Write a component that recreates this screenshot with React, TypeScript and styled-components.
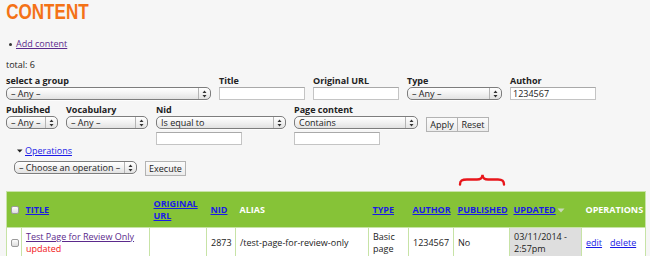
import React from 'react';
import styled, { createGlobalStyle } from 'styled-components';

const GlobalStyle = createGlobalStyle`
  html, body {
    margin: 0;
    padding: 0;
    background: #f6f6f6;
  }
  body {
    font-family: "Open Sans", "DejaVu Sans", sans-serif;
    font-size: 9px;
    line-height: 12px;
    color: #222;
  }
`;

const Page = styled.div`
  position: relative;
  width: 650px;
  height: 256px;
  overflow: hidden;
  padding: 0 5px 0 6px;
  box-sizing: border-box;
`;

const Title = styled.h1`
  margin: 0;
  height: 24px;
  font-family: "Liberation Sans", Arial, sans-serif;
  font-size: 22px;
  line-height: 24px;
  font-weight: 700;
  color: #f47216;
  transform: scaleX(0.775);
  transform-origin: 1px 0;
`;

const ActionList = styled.ul`
  margin: 14px 0 0;
  padding: 0 0 0 10px;
  list-style: none;

  li {
    position: relative;
  }
  li::before {
    content: '';
    position: absolute;
    left: -7px;
    top: 5px;
    width: 3px;
    height: 3px;
    border-radius: 50%;
    background: #333;
  }
`;

const Link = styled.a<{ $visited?: boolean }>`
  color: ${(p) => (p.$visited ? '#5b2a8c' : '#1a1ae6')};
  text-decoration: underline;
  cursor: pointer;
`;

const Total = styled.div`
  margin-top: 9px;
`;

const FilterRow = styled.div<{ $top: number }>`
  display: flex;
  align-items: flex-start;
  gap: 8px;
  margin-top: ${(p) => p.$top}px;
`;

const Field = styled.div<{ $w: number }>`
  display: flex;
  flex-direction: column;
  width: ${(p) => p.$w}px;
  gap: 3px;
`;

const Label = styled.label`
  font-weight: 700;
  font-size: 9px;
  line-height: 12px;
  height: 12px;
  color: #222;
  white-space: nowrap;
  margin-bottom: -3px;
`;

const SelectBox = styled.div<{ $w: number }>`
  display: flex;
  align-items: stretch;
  box-sizing: border-box;
  width: ${(p) => p.$w}px;
  height: 13px;
  border: 1px solid #7d7d7d;
  border-radius: 5px;
  background: linear-gradient(#ffffff, #f2f2f2 50%, #e2e2e2);
  box-shadow: 0 1px 0 rgba(255, 255, 255, 0.8);
  font-size: 9px;
  line-height: 11px;
  color: #222;
  overflow: hidden;
`;

const SelectText = styled.span`
  flex: 1;
  padding-left: 4px;
  white-space: nowrap;
  overflow: hidden;
`;

const SelectArrow = styled.span`
  display: flex;
  align-items: center;
  justify-content: center;
  width: 11px;
  border-left: 1px solid #b4b4b4;
`;

const TextInput = styled.input<{ $w: number }>`
  box-sizing: border-box;
  width: ${(p) => p.$w}px;
  height: 13px;
  margin: 0;
  padding: 0 2px;
  border: 1px solid #c4c4c4;
  border-top-color: #a9a9a9;
  background: #fff;
  font-family: inherit;
  font-size: 9px;
  line-height: 11px;
  color: #222;
  outline: none;
`;

const ButtonGroup = styled.div`
  display: flex;
  margin-top: 13px;
`;

const Button = styled.button<{ $w: number }>`
  box-sizing: border-box;
  width: ${(p) => p.$w}px;
  height: 15px;
  margin: 0;
  padding: 0;
  border: 1px solid #b3b3b3;
  background: linear-gradient(#fbfbfb, #ececec);
  font-family: inherit;
  font-size: 9px;
  line-height: 13px;
  color: #222;
  & + & {
    border-left: none;
  }
`;

const Operations = styled.div`
  margin: 0 0 0 8px;
`;

const Legend = styled.div`
  display: flex;
  align-items: center;
  gap: 2px;
  padding-left: 3px;
`;

const OpRow = styled.div`
  display: flex;
  align-items: flex-start;
  gap: 8px;
  margin-top: 4px;
`;

const TableWrap = styled.div`
  position: relative;
  margin-top: 15px;
`;

const Brace = styled.svg`
  position: absolute;
  left: 452px;
  top: -18px;
`;

const Table = styled.table`
  width: 639px;
  border-collapse: collapse;
  table-layout: fixed;
  background: #fff;
  border: 1px solid #c7e3a6;
`;

const HeadCell = styled.th<{ $plain?: boolean }>`
  background: #86c337;
  height: 35px;
  padding: 0 3px 0 4px;
  text-align: left;
  vertical-align: middle;
  font-size: 9px;
  line-height: 12px;
  font-weight: 700;
  text-transform: uppercase;
  color: ${(p) => (p.$plain ? '#fff' : '#1a1ae6')};
  white-space: nowrap;

  a {
    color: #1a1ae6;
  }
`;

const Cell = styled.td<{ $active?: boolean }>`
  height: 30px;
  padding: 0 3px 0 4px;
  border: 1px solid #c7e3a6;
  vertical-align: middle;
  font-size: 9px;
  line-height: 12px;
  color: #222;
  background: ${(p) => (p.$active ? '#dedede' : '#fff')};
  white-space: nowrap;
`;

const Check = styled.input.attrs({ type: 'checkbox' })`
  appearance: none;
  display: block;
  box-sizing: border-box;
  width: 8px;
  height: 8px;
  margin: 0 0 0 0;
  border: 1px solid #9a9a9a;
  border-radius: 2px;
  background: linear-gradient(#fdfdfd, #dcdcdc);
`;

const Updated = styled.span`
  color: #f21414;
`;

const OpLinks = styled.div`
  display: flex;
  gap: 8px;
`;

const Arrows = () => (
  <svg width="5" height="8" viewBox="0 0 5 8">
    <path d="M2.5 0.5 L4.5 3 L0.5 3 Z M2.5 7.5 L4.5 5 L0.5 5 Z" fill="#333" />
  </svg>
);

const Select = ({ w, value }: { w: number; value: string }) => (
  <SelectBox $w={w}>
    <SelectText>{value}</SelectText>
    <SelectArrow>
      <Arrows />
    </SelectArrow>
  </SelectBox>
);

const App = () => (
  <>
    <GlobalStyle />
    <Page>
      <Title>CONTENT</Title>
      <ActionList>
        <li>
          <Link $visited>Add content</Link>
        </li>
      </ActionList>
      <Total>total: 6</Total>

      <FilterRow $top={4}>
        <Field $w={205}>
          <Label>select a group</Label>
          <Select w={205} value="– Any –" />
        </Field>
        <Field $w={86}>
          <Label>Title</Label>
          <TextInput $w={86} />
        </Field>
        <Field $w={86}>
          <Label>Original URL</Label>
          <TextInput $w={86} />
        </Field>
        <Field $w={95}>
          <Label>Type</Label>
          <Select w={95} value="– Any –" />
        </Field>
        <Field $w={86}>
          <Label>Author</Label>
          <TextInput $w={86} defaultValue="1234567" />
        </Field>
      </FilterRow>

      <FilterRow $top={4}>
        <Field $w={52}>
          <Label>Published</Label>
          <Select w={52} value="– Any –" />
        </Field>
        <Field $w={82}>
          <Label>Vocabulary</Label>
          <Select w={82} value="– Any –" />
        </Field>
        <Field $w={130}>
          <Label>Nid</Label>
          <Select w={130} value="Is equal to" />
          <TextInput $w={86} />
        </Field>
        <Field $w={124}>
          <Label>Page content</Label>
          <Select w={124} value="Contains" />
          <TextInput $w={86} />
        </Field>
        <ButtonGroup>
          <Button $w={32}>Apply</Button>
          <Button $w={31}>Reset</Button>
        </ButtonGroup>
      </FilterRow>

      <Operations>
        <Legend>
          <svg width="6" height="4" viewBox="0 0 6 4">
            <path d="M0 0.5 L5.5 0.5 L2.75 3.5 Z" fill="#222" />
          </svg>
          <Link>Operations</Link>
        </Legend>
        <OpRow>
          <Select w={123} value="– Choose an operation –" />
          <Button $w={41}>Execute</Button>
        </OpRow>
      </Operations>

      <TableWrap>
        <Brace width="48" height="13" viewBox="0 0 48 13">
          <path
            d="M2 11.5 C2 7.5 4 6.5 9 6.5 L19 6.5 C23 6.5 24 5 24.5 2 C25 5 26 6.5 30 6.5 L40 6.5 C44 6.5 46 7.5 46 11.5"
            fill="none"
            stroke="#e8161b"
            strokeWidth="2.4"
            strokeLinecap="round"
          />
        </Brace>
        <Table>
          <colgroup>
            <col style={{ width: 15 }} />
            <col style={{ width: 128 }} />
            <col style={{ width: 57 }} />
            <col style={{ width: 29 }} />
            <col style={{ width: 133 }} />
            <col style={{ width: 40 }} />
            <col style={{ width: 45 }} />
            <col style={{ width: 56 }} />
            <col style={{ width: 72 }} />
            <col style={{ width: 64 }} />
          </colgroup>
          <thead>
            <tr>
              <HeadCell>
                <Check />
              </HeadCell>
              <HeadCell>
                <Link>Title</Link>
              </HeadCell>
              <HeadCell>
                <Link>
                  Original
                  <br />
                  URL
                </Link>
              </HeadCell>
              <HeadCell>
                <Link>Nid</Link>
              </HeadCell>
              <HeadCell $plain>Alias</HeadCell>
              <HeadCell>
                <Link>Type</Link>
              </HeadCell>
              <HeadCell>
                <Link>Author</Link>
              </HeadCell>
              <HeadCell>
                <Link>Published</Link>
              </HeadCell>
              <HeadCell>
                <Link>Updated</Link>
                <svg width="8" height="5" viewBox="0 0 8 5" style={{ marginLeft: 1 }}>
                  <path d="M0.5 0.5 L7.5 0.5 L4 4.5 Z" fill="#c9d9b8" />
                </svg>
              </HeadCell>
              <HeadCell $plain>Operations</HeadCell>
            </tr>
          </thead>
          <tbody>
            <tr>
              <Cell>
                <Check />
              </Cell>
              <Cell>
                <Link $visited>Test Page for Review Only</Link>
                <br />
                <Updated>updated</Updated>
              </Cell>
              <Cell />
              <Cell>2873</Cell>
              <Cell>/test-page-for-review-only</Cell>
              <Cell>
                Basic
                <br />
                page
              </Cell>
              <Cell>1234567</Cell>
              <Cell>No</Cell>
              <Cell $active>
                03/11/2014 -
                <br />
                2:57pm
              </Cell>
              <Cell>
                <OpLinks>
                  <Link>edit</Link>
                  <Link>delete</Link>
                </OpLinks>
              </Cell>
            </tr>
          </tbody>
        </Table>
      </TableWrap>
    </Page>
  </>
);

export default App;
